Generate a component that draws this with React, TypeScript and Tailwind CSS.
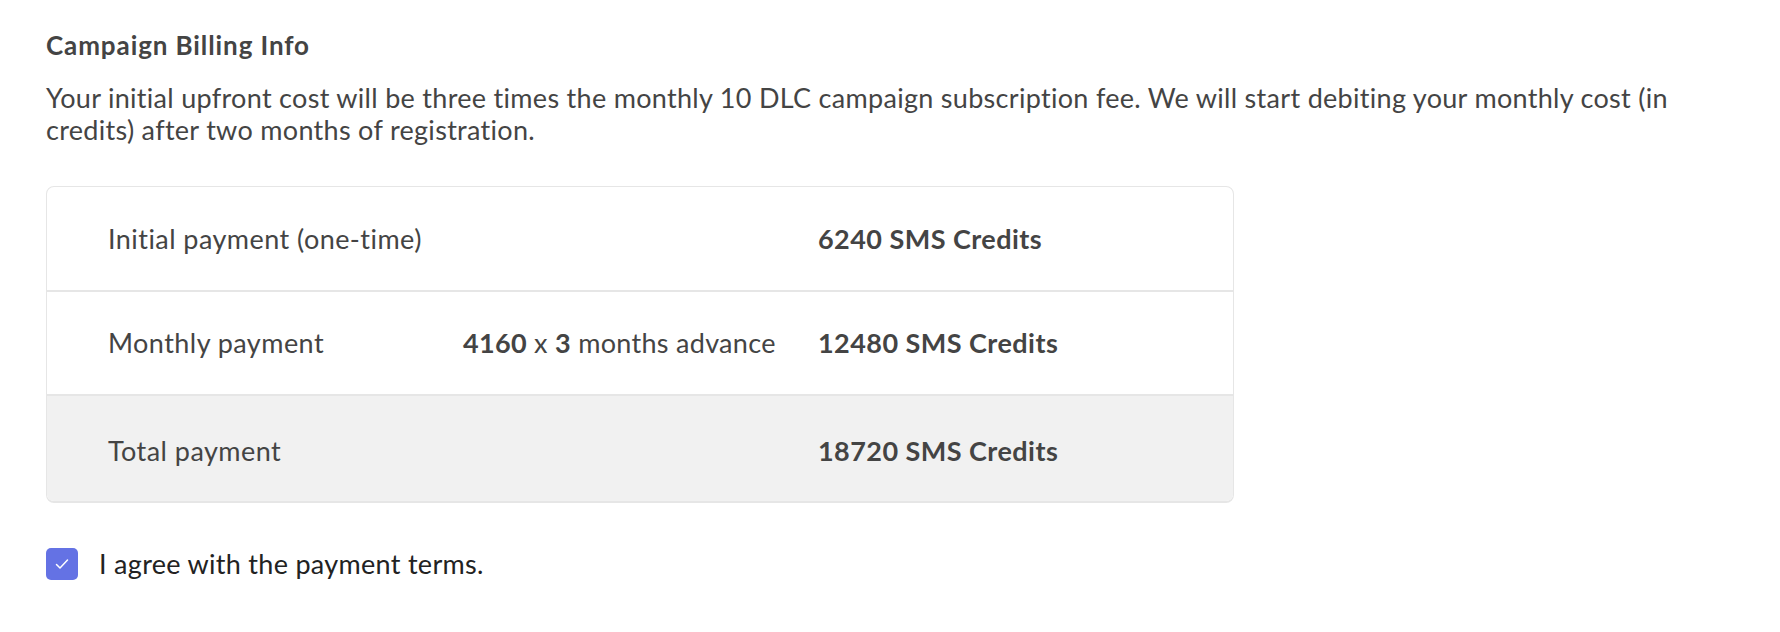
import React from "react";

export default function App() {
  return (
    <div
      className="min-h-[632px] w-full bg-white pl-[46px] pr-[40px] pt-[31px] text-[#444444]"
      style={{ fontFamily: "Lato, 'Noto Sans', sans-serif" }}
    >
      <h2 className="text-[26px] font-bold leading-[28px] tracking-[0.9px]">Campaign Billing Info</h2>
      <p className="mt-[23px] w-[1660px] text-[27px] leading-[32px] tracking-[0.3px]">
        Your initial upfront cost will be three times the monthly 10 DLC campaign subscription fee. We will start
        debiting your monthly cost (in credits) after two months of registration.
      </p>

      <div className="mt-[40px] w-[1188px] overflow-hidden rounded-[8px] border border-[#e6e6e6] border-b-[2px] text-[27px] leading-[30px] tracking-[0.45px]">
        <div className="grid h-[103px] grid-cols-[355px_355px_1fr] items-center pl-[61px]">
          <div>Initial payment (one-time)</div>
          <div></div>
          <div className="font-bold">6240 SMS Credits</div>
        </div>
        <div className="grid h-[104px] grid-cols-[355px_355px_1fr] items-center border-t-[2px] border-[#e6e6e6] pl-[61px]">
          <div>Monthly payment</div>
          <div className="tracking-[0.3px]">
            <span className="font-bold">4160</span> x <span className="font-bold">3</span> months advance
          </div>
          <div className="font-bold">12480 SMS Credits</div>
        </div>
        <div className="grid h-[107px] grid-cols-[355px_355px_1fr] items-center border-t-[2px] border-[#e6e6e6] bg-[#f1f1f1] pl-[61px] pt-[4px]">
          <div>Total payment</div>
          <div></div>
          <div className="font-bold">18720 SMS Credits</div>
        </div>
      </div>

      <label className="mt-[45px] flex items-center gap-[21px]">
        <span className="flex h-[32px] w-[32px] items-center justify-center rounded-[5px] bg-[#6472e4]">
          <svg width="20" height="20" viewBox="0 0 20 20" fill="none">
            <path d="M4.5 10.5l3.5 3.5 7.5-8" stroke="white" strokeWidth="1.5" strokeLinecap="round" strokeLinejoin="round" />
          </svg>
        </span>
        <span className="text-[27px] leading-[30px] tracking-[0.3px] text-[#222222]">I agree with the payment terms.</span>
      </label>
    </div>
  );
}
